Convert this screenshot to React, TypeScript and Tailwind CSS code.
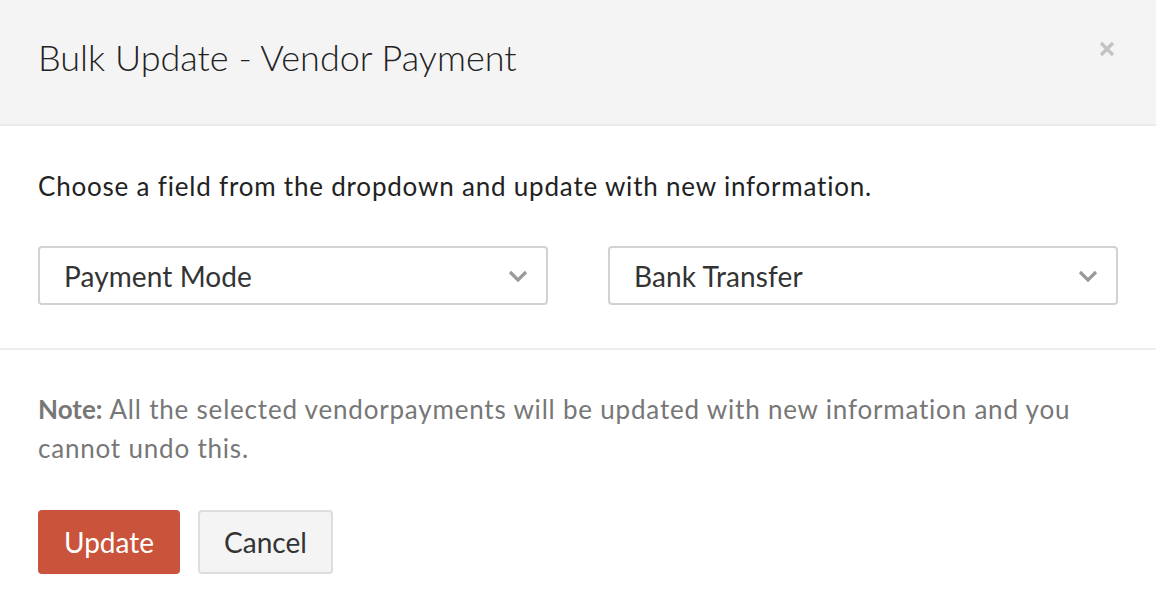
const font = { fontFamily: "Lato, 'Open Sans', sans-serif" };

function Chevron() {
  return (
    <svg width="20" height="12" viewBox="0 0 20 12" fill="none" className="shrink-0">
      <path d="M2 2l8 8 8-8" stroke="#9a9a9a" strokeWidth="3.2" />
    </svg>
  );
}

function Select({ value }: { value: string }) {
  return (
    <div className="flex h-[59px] flex-1 items-center justify-between rounded-[4px] border-2 border-[#d2d2d2] bg-white pl-[24px] pr-[18px]">
      <span className="text-[28px] tracking-[0.1px] text-[#333333]">{value}</span>
      <Chevron />
    </div>
  );
}

export default function App() {
  return (
    <div className="h-[616px] w-[1156px] bg-white" style={font}>
      <div className="flex h-[126px] items-start justify-between border-b-2 border-[#ebebeb] bg-[#f4f4f4] pl-[38px] pr-[40px]">
        <h1 className="mt-[30px] text-[36px] font-light text-[#222222]">Bulk Update - Vendor Payment</h1>
        <svg width="18" height="18" viewBox="0 0 18 18" className="mt-[40px]">
          <path d="M3 3l12 12M15 3L3 15" stroke="#c2c2c2" strokeWidth="3.2" />
        </svg>
      </div>

      <div className="border-b-2 border-[#eeeeee] px-[38px] pb-[43px] pt-[42px]">
        <p className="text-[26px] leading-[36px] tracking-[0.8px] text-[#222222]">
          Choose a field from the dropdown and update with new information.
        </p>
        <div className="mt-[42px] flex gap-[60px]">
          <Select value="Payment Mode" />
          <Select value="Bank Transfer" />
        </div>
      </div>

      <div className="px-[38px] pt-[40px]">
        <div className="text-[26px] leading-[39px] tracking-[0.8px] text-[#777777]">
          <p className="flex gap-[7px]">
            <b className="font-bold tracking-normal">Note:</b>
            <span>All the selected vendorpayments will be updated with new information and you</span>
          </p>
          <p>cannot undo this.</p>
        </div>
        <div className="mt-[42px] flex gap-[18px]">
          <button className="h-[64px] w-[142px] rounded-[4px] bg-[#c9533b] text-[28px] text-white">Update</button>
          <button className="h-[64px] w-[135px] rounded-[4px] border-2 border-[#dddddd] bg-[#f4f4f4] text-[28px] text-[#333333]">Cancel</button>
        </div>
      </div>
    </div>
  );
}
